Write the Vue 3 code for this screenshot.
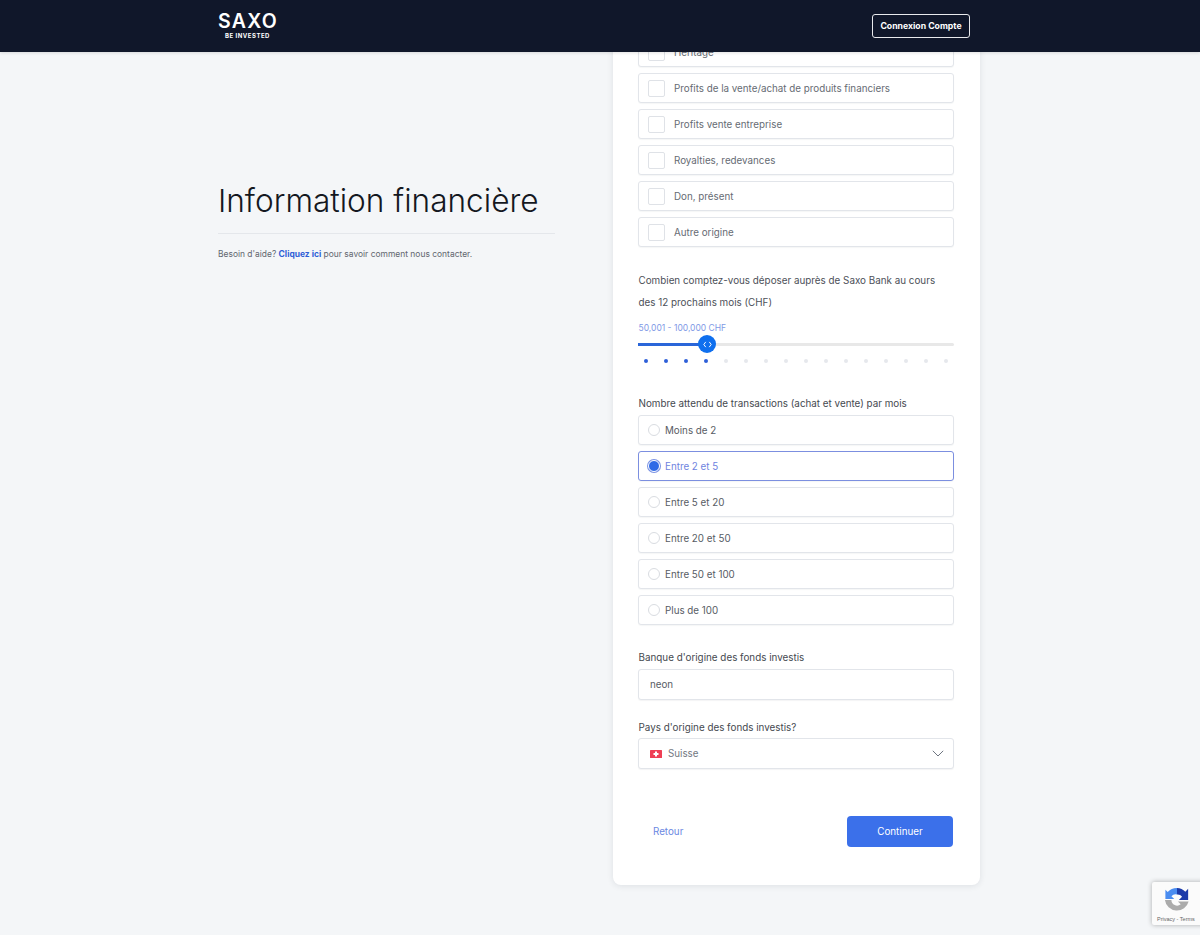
<script setup>
const origins = ['Héritage', 'Profits de la vente/achat de produits financiers', 'Profits vente entreprise', 'Royalties, redevances', 'Don, présent', 'Autre origine']
const dots = Array.from({ length: 16 }, (_, i) => i < 4)
const radios = ['Moins de 2', 'Entre 2 et 5', 'Entre 5 et 20', 'Entre 20 et 50', 'Entre 50 et 100', 'Plus de 100']
const selected = 'Entre 2 et 5'
</script>

<template>
  <div class="page">
    <header class="topbar">
      <div class="logo">
        <div class="logo-main">SAXO</div>
        <div class="logo-sub">BE INVESTED</div>
      </div>
      <button class="login">Connexion Compte</button>
    </header>

    <main class="content">
      <section class="intro">
        <h1>Information financière</h1>
        <p>Besoin d'aide? <a>Cliquez ici</a> pour savoir comment nous contacter.</p>
      </section>

      <section class="card">
        <div class="options">
          <label v-for="o in origins" :key="o" class="row check-row">
            <span class="box"></span>
            <span>{{ o }}</span>
          </label>
        </div>

        <p class="question">Combien comptez-vous déposer auprès de Saxo Bank au cours des 12 prochains mois (CHF)</p>
        <div class="slider-value">50,001 - 100,000 CHF</div>
        <div class="slider">
          <div class="track"><div class="fill"></div></div>
          <div class="thumb">
            <svg width="9" height="7" viewBox="0 0 10 8" fill="none" stroke="#fff" stroke-width="1.1">
              <path d="M3 1 L0.8 4 L3 7" />
              <path d="M7 1 L9.2 4 L7 7" />
            </svg>
          </div>
        </div>
        <div class="dots">
          <span v-for="(on, i) in dots" :key="i" class="dot" :class="{ on }"></span>
        </div>

        <div class="label first">Nombre attendu de transactions (achat et vente) par mois</div>
        <div class="options">
          <label v-for="r in radios" :key="r" class="row radio-row" :class="{ active: r === selected }">
            <span class="radio"></span>
            <span>{{ r }}</span>
          </label>
        </div>

        <div class="label bank">Banque d'origine des fonds investis</div>
        <div class="field">neon</div>

        <div class="label country">Pays d'origine des fonds investis?</div>
        <div class="field select">
          <svg class="flag" width="12" height="8" viewBox="0 0 12 8">
            <rect width="12" height="8" rx="0.5" fill="#ef3f55" />
            <path d="M5 1.500h2v1.500h1.500v2H7v1.500H5V5H3.500V3H5z" fill="#fff" />
          </svg>
          <span class="country-name">Suisse</span>
          <svg class="chev" width="12" height="7" viewBox="0 0 12 7" fill="none" stroke="#6e7580" stroke-width="1">
            <path d="M0.8 0.8 L6 6 L11.200 0.8" />
          </svg>
        </div>

        <div class="actions">
          <a class="back">Retour</a>
          <button class="next">Continuer</button>
        </div>
      </section>
    </main>

    <aside class="recaptcha">
      <svg width="26" height="26" viewBox="0 0 28 28">
        <path d="M14 1 A13 13 0 0 0 4 5.500 L1.500 3 V13 H11 L8 10 A6 6 0 0 1 14 8 Z" fill="#4a8cf0" />
        <path d="M14 1 A13 13 0 0 1 23 5 L26 2 V14 H16 L19.500 10.500 A6 6 0 0 0 14 8 Z" fill="#1c3aa9" />
        <path d="M1 14 H8 A6 6 0 0 0 18 18.500 L15 15.500 H26.500 A13 13 0 0 1 1 14 Z" fill="#ababab" />
      </svg>
      <div class="rc-text">Privacy - Terms</div>
    </aside>
  </div>
</template>

<style>
html, body { margin: 0; background: #f4f6f8; }
</style>

<style scoped>
.page {
  position: relative;
  height: 935px;
  overflow: hidden;
  background: #f4f6f8;
  font-family: Inter, "Liberation Sans", sans-serif;
  color: #3c4048;
}
.topbar {
  position: absolute;
  top: 0;
  left: 0;
  right: 0;
  z-index: 2;
  height: 52px;
  box-sizing: border-box;
  padding: 0 230px 0 218px;
  background: #10172a;
  display: flex;
  align-items: center;
  justify-content: space-between;
  box-shadow: 0 1px 3px rgba(0, 0, 0, .12);
}
.logo { color: #fff; text-align: center; width: 59px; margin-top: -1px; }
.logo-main { font-size: 19.500px; line-height: 20px; font-weight: 600; letter-spacing: 1.300px; white-space: nowrap; }
.logo-sub { font-size: 6px; line-height: 9px; font-weight: 700; letter-spacing: .5px; white-space: nowrap; }
.login {
  width: 98px;
  height: 24px;
  padding: 0;
  box-sizing: border-box;
  background: transparent;
  border: 1.500px solid #e8e9ec;
  border-radius: 3px;
  color: #fff;
  font: 700 8.700px/1 Inter, sans-serif;
}
.content {
  display: flex;
  align-items: flex-start;
  padding-left: 218px;
}
.intro { width: 337px; padding-top: 182px; margin-right: 58px; }
.intro h1 {
  margin: 0;
  padding-bottom: 14px;
  border-bottom: 1px solid #e4e7eb;
  font-size: 31.600px;
  line-height: 37px;
  font-weight: 300;
  color: #14181f;
  white-space: nowrap;
}
.intro p { margin: 14px 0 0; font-size: 8.450px; line-height: 12px; color: #62676f; white-space: nowrap; }
.intro a { color: #2f5fd7; font-weight: 700; }
.card {
  width: 367px;
  height: 885px;
  box-sizing: border-box;
  padding: 37px 26px 0 25px;
  background: #fff;
  border-radius: 0 0 8px 8px;
  box-shadow: 0 1px 6px rgba(30, 40, 60, .1);
}
.options { display: flex; flex-direction: column; gap: 6px; }
.row {
  height: 30px;
  box-sizing: border-box;
  display: flex;
  align-items: center;
  background: #fff;
  border: 1px solid #e2e5ea;
  border-radius: 3px;
  box-shadow: 0 1px 1px rgba(30, 40, 60, .04);
  font-size: 9.800px;
  white-space: nowrap;
}
.check-row { padding-left: 9px; color: #666b73; }
.box {
  width: 17px;
  height: 17px;
  margin-right: 9px;
  box-sizing: border-box;
  border: 1px solid #dfe2e7;
  border-radius: 2px;
}
.radio-row { padding-left: 9px; color: #575c64; }
.radio {
  width: 12px;
  height: 12px;
  margin-right: 5px;
  box-sizing: border-box;
  border: 1px solid #d9dce1;
  border-radius: 50%;
}
.radio-row.active { border-color: #7c8fe0; color: #6f83e0; }
.active .radio {
  background: #2f6ae6;
  border: 1px solid #fff;
  box-shadow: 0 0 0 1px #7c93e4;
}
.question {
  margin: 22px 0 0;
  padding-left: .5px;
  font-size: 9.850px;
  line-height: 22px;
  color: #4c5058;
}
.slider-value { margin-top: 9px; padding-left: .5px; font-size: 8.500px; line-height: 12px; color: #7f9ae6; }
.slider { position: relative; height: 18px; }
.track { position: absolute; top: 9px; left: 0; right: 0; height: 3px; background: #e8e8e8; border-radius: 2px; }
.fill { width: 69px; height: 100%; background: #2a66d9; }
.thumb {
  position: absolute;
  left: 60px;
  top: 1px;
  width: 18px;
  height: 18px;
  border-radius: 50%;
  background: #0f6fee;
  display: flex;
  align-items: center;
  justify-content: center;
}
.dots { display: flex; gap: 16px; padding-left: 6px; margin-top: 7px; height: 4px; }
.dot { width: 4px; height: 4px; border-radius: 50%; background: #e6e8ec; }
.dot.on { background: #2d5fd8; }
.label { padding-left: .5px; font-size: 9.850px; line-height: 14px; color: #45494f; white-space: nowrap; }
.label.first { margin-top: 33px; margin-bottom: 5px; }
.label.bank { margin-top: 25px; margin-bottom: 5px; }
.label.country { margin-top: 20px; margin-bottom: 4px; }
.field {
  height: 31px;
  box-sizing: border-box;
  padding-left: 11px;
  display: flex;
  align-items: center;
  background: #fff;
  border: 1px solid #e2e5ea;
  border-radius: 3px;
  box-shadow: 0 1px 1px rgba(30, 40, 60, .05);
  font-size: 9.800px;
  color: #575c64;
}
.select { padding-right: 9px; color: #72777f; }
.flag { margin-right: 6px; }
.country-name { flex: 1; }
.actions { display: flex; align-items: center; justify-content: space-between; margin: 47px 1px 0 0; padding-left: 15px; }
.back { font-size: 9.800px; color: #6b88e2; }
.next {
  width: 106px;
  height: 31px;
  padding: 0;
  background: #3b70ea;
  border: 0;
  border-radius: 4px;
  color: #fff;
  font: 400 9.800px/1 Inter, sans-serif;
}
.recaptcha {
  position: absolute;
  left: 1152px;
  top: 882px;
  width: 60px;
  height: 43px;
  box-sizing: border-box;
  background: #fbfbfb;
  box-shadow: 0 0 5px rgba(0, 0, 0, .3);
  border-radius: 2px;
  padding-top: 5px;
  padding-left: 12px;
}
.rc-text { margin: -2px 0 0 -7px; font: 5.500px/8px "Liberation Sans", sans-serif; color: #666; white-space: nowrap; }
</style>
